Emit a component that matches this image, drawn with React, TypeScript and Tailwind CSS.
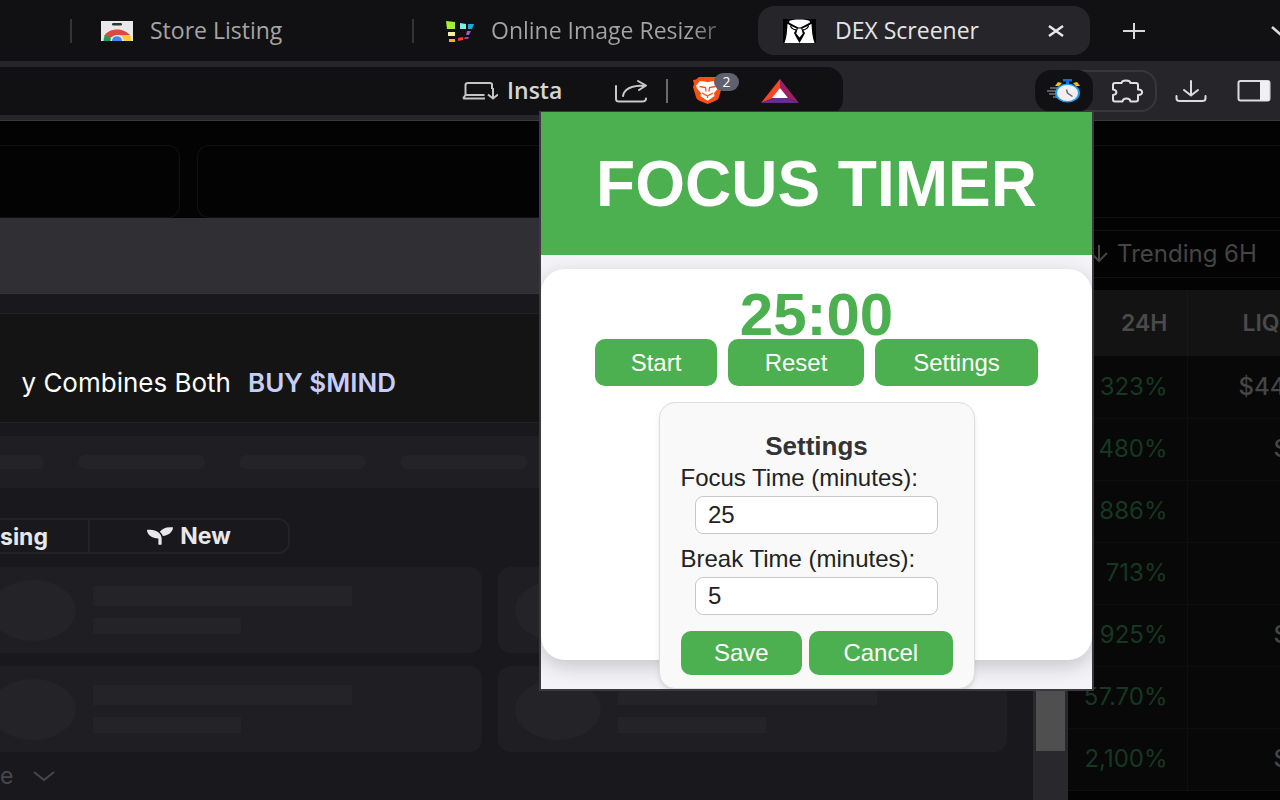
import type { ReactNode } from 'react';
import { FaSeedling } from 'react-icons/fa';

type Row = { change: string; liq: string; near?: boolean };

const ROWS: Row[] = [
  { change: '323%', liq: '$44', near: true },
  { change: '480%', liq: '$' },
  { change: '886%', liq: '' },
  { change: '713%', liq: '' },
  { change: '925%', liq: '$' },
  { change: '57.70%', liq: '' },
  { change: '2,100%', liq: '$' },
];

function StoreIcon() {
  return (
    <svg className="h-5 w-8 shrink-0" viewBox="0 0 32 20">
      <path fill="#e9e9ea" d="M0 0h32v20H0z" />
      <rect x="11" y="2" width="10" height="2.4" rx="1.2" fill="#333" />
      <path fill="#dc4a3e" d="M3 15C6 10.500 11 8.500 16 8.500s10 2 13 5.500H16l-7 3z" />
      <path fill="#1f9d58" d="M4 14c-1 2-1.500 4-1.500 6H11l-1.500-3z" />
      <path fill="#fccb3d" d="M16 14h13c1 2 1.500 4 1.500 6H21z" />
      <ellipse cx="16" cy="19.500" rx="6.500" ry="5.500" fill="#e9e9ea" />
      <ellipse cx="16" cy="19.500" rx="5" ry="4.300" fill="#4285f4" />
    </svg>
  );
}

function ResizerIcon() {
  return (
    <svg className="h-6 w-7 shrink-0" viewBox="0 0 28 24">
      <path fill="#a3f02c" d="M0 2l9 1v7H1z" />
      <path fill="#7df0ee" d="M14 4l6 1v5h-6z" />
      <path fill="#16a8e8" d="M22 5h6l-2 5h-4z" />
      <path fill="#f5f09a" d="M2 13h7v4H2z" />
      <path fill="#9a5cc8" d="M21 12h4l-2 4h-3z" />
      <path fill="#f0b414" d="M3 20h6v3H3z" />
      <path fill="#f0420f" d="M12 19l5-1v3l-5 1z" />
      <path fill="#a83aa0" d="M19 18h4l-1 2h-4z" />
    </svg>
  );
}

function DexIcon() {
  return (
    <svg className="h-6 w-[33px] shrink-0" viewBox="0 0 33 24">
      <path fill="#000" d="M0 0h33v24H0z" />
      <path fill="#fff" d="M7 1.500C11 0 22 0 26 1.500L28.500 5c.5 6 .5 13 3 19h-30c2.500-6 2.500-13 3-19z" />
      <path fill="none" stroke="#000" strokeWidth="1.800" d="M4.500 3.500C8 6.500 12 7 15 9.500M28.500 3.500C25 6.500 21 7 18 9.500" />
      <path fill="none" stroke="#000" strokeWidth="1.300" d="M7.500 6.500c.5 3 3 4 5.500 4.500M25.500 6.500c-.5 3-3 4-5.500 4.500" />
      <path fill="#000" d="M14.500 8.500L11 14l1.500 3 4 7 4-7L22 14l-3.500-5.500z" />
      <path fill="#fff" d="M14.800 9.500h3.400l1.600 5-3.300 4-3.300-4z" />
    </svg>
  );
}

function InstallIcon() {
  return (
    <svg className="h-5 w-9 shrink-0" viewBox="0 0 36 20" fill="none" stroke="#c4c4c6" strokeWidth="2">
      <path d="M30 8V3.500Q30 2 28 2H6Q3.500 2 3.500 4v10h19M1 17.500h22M1 17.500l2.500-3.500M31 7v10.500M26 13.500l5 4 5-4" />
    </svg>
  );
}

function ShareIcon() {
  return (
    <svg className="h-6 w-[34px]" viewBox="0 0 34 24" fill="none" stroke="#c9c9cb" strokeWidth="2" strokeLinecap="round" strokeLinejoin="round">
      <path d="M2 7v13q0 2.500 3 2.500h23q4 0 4-3" />
      <path d="M9 17C10 9.500 18 6.500 31 6.500M24 2l8 4.500-7 4.500" />
    </svg>
  );
}

function LionIcon() {
  return (
    <svg className="h-[27px] w-[31px]" viewBox="0 0 31 27">
      <path fill="#fb4f13" d="M7 0h17l3 2.500 3 .5-1 4 1 3-3 10c-.5 2-2 3-4 4l-7.500 3L8 24c-2-1-3.500-2-4-4L1 10l1-3-1-4 3-.500z" />
      <path fill="#fff" d="M8 4l4.500.5 3 .7 3-.7L23 4l4 4.500-1 3-4 4.500.5 3-7 5-7-5L9 16l-4-4.500-1-3z" />
      <path fill="none" stroke="#fb4f13" strokeWidth="1.300" d="M7.500 9.500l6 1 .5 4M23.500 9.500l-6 1-.5 4M10 16l5.500 3 5.500-3M15.500 19v2" />
    </svg>
  );
}

function BatIcon() {
  return (
    <svg className="h-6 w-[38px]" viewBox="0 0 38 24">
      <path fill="#ff4724" d="M19 0v9l-7 10L0 24z" />
      <path fill="#9e1f63" d="M19 0l19 24-12-5-7-10z" />
      <path fill="#662d91" d="M0 24l12-5h14l12 5z" />
      <path fill="#fff" d="M19 9l8 10H11z" />
    </svg>
  );
}

function StopwatchIcon() {
  return (
    <svg className="h-6 w-9" viewBox="0 0 36 24">
      <path stroke="#77777a" strokeWidth="1.500" d="M4 9h9M1 12h10M3 15h9M7 18h6" />
      <path fill="#f5c400" d="M9 7l3-4 4 1-3 3zM34 7l-3-4-4 1 3 3z" />
      <path fill="#0d6fd0" d="M17 0h9v2.500h-3V5h-3V2.500h-3z" />
      <ellipse cx="21.500" cy="14" rx="12.500" ry="9.500" fill="#1e9bf5" />
      <ellipse cx="21.500" cy="14" rx="10.500" ry="8" fill="#f4eef0" />
      <path stroke="#5d6b78" strokeWidth="1.500" fill="none" d="M20.500 10.500l1 3.500 5 3.500" />
    </svg>
  );
}

function PuzzleIcon() {
  return (
    <svg className="h-6 w-[34px]" viewBox="0 0 34 24" fill="none" stroke="#e0e0e3" strokeWidth="2" strokeLinejoin="round">
      <path d="M5 4h6.500C12 .5 20 .5 20.500 4H26q2 0 2 2v4.500c5.500.2 5.500 5.300 0 5.500v4.500q0 2-2 2h-5.500c-.5-4-7.500-4-8 0H5q-2 0-2-2V16c4.500-.5 4.500-5 0-5.500V6q0-2 2-2z" />
    </svg>
  );
}

function DownloadIcon() {
  return (
    <svg className="h-6 w-8" viewBox="0 0 32 24" fill="none" stroke="#dcdcde" strokeWidth="2" strokeLinecap="round" strokeLinejoin="round">
      <path d="M16 2v14M9 11l7 5.500 7-5.500M1.500 17v2.500Q1.500 22 5 22h22q3.500 0 3.500-2.500V17" />
    </svg>
  );
}

function SidebarIcon() {
  return (
    <svg className="h-6 w-[34px]" viewBox="0 0 34 24">
      <rect x="1.500" y="2" width="31" height="19.500" rx="2" fill="none" stroke="#dcdcde" strokeWidth="2" />
      <path fill="#f0f0f2" d="M23 2h9v19.500h-9z" />
    </svg>
  );
}

function TabBar() {
  return (
    <nav className="flex h-[61px] shrink-0 items-center overflow-hidden bg-[#111114] font-['Open_Sans',sans-serif] text-[23px] text-[#a4a4a6]">
      <div className="h-6 w-[72px] shrink-0 border-r-2 border-[#343337]" />
      <a href="#store" className="flex h-6 w-[342px] shrink-0 items-center gap-[17px] border-r-2 border-[#343337] pl-[29px]">
        <StoreIcon />
        Store Listing
      </a>
      <a href="#resizer" className="flex h-10 w-[344px] shrink-0 items-center gap-[17px] pl-8">
        <ResizerIcon />
        <span className="w-[236px] overflow-hidden bg-linear-to-r from-[#a4a4a6] from-85% to-[#3a3a3d] bg-clip-text whitespace-nowrap text-transparent">
          Online Image Resizer
        </span>
      </a>
      <div className="flex h-[49px] w-[332px] shrink-0 items-center rounded-2xl bg-[#26252a] px-[25px] text-[#e4e4e6]">
        <DexIcon />
        <a href="#dex" className="ml-[19px] flex-1">DEX Screener</a>
        <button type="button" aria-label="Close tab">
          <svg className="h-4 w-[18px]" viewBox="0 0 18 16" stroke="#e8e8ea" strokeWidth="2.500">
            <path d="M2 3l14 10M16 3L2 13" />
          </svg>
        </button>
      </div>
      <button type="button" aria-label="New tab" className="ml-8 shrink-0">
        <svg className="h-[18px] w-6" viewBox="0 0 24 18" stroke="#d8d8da" strokeWidth="2">
          <path d="M1 9h22M12 1v16" />
        </svg>
      </button>
      <button type="button" aria-label="Search tabs" className="ml-[125px] shrink-0">
        <svg className="h-[10px] w-[18px]" viewBox="0 0 18 10" fill="none" stroke="#d8d8da" strokeWidth="2.500">
          <path d="M1 1l8 7 8-7" />
        </svg>
      </button>
    </nav>
  );
}

function Toolbar() {
  return (
    <div className="flex h-[60px] shrink-0 items-center overflow-hidden border-b border-[#3a393d] bg-[#26252a]">
      <div className="flex h-12 w-[843px] shrink-0 items-center rounded-r-2xl bg-[#111114] pl-[462px]">
        <button type="button" className="flex items-center gap-[9px] text-[#d5d5d7]">
          <InstallIcon />
          <span className="w-[56px] overflow-hidden text-left font-['Open_Sans',sans-serif] text-[23px] font-semibold">
            Insta
          </span>
        </button>
        <button type="button" aria-label="Share" className="ml-[51px]">
          <ShareIcon />
        </button>
        <div className="ml-[18px] h-6 w-0.5 bg-[#6c6c70]" />
        <button type="button" aria-label="Shields" className="relative ml-6">
          <LionIcon />
          <span className="absolute -top-1 left-[22px] flex h-[18px] w-[25px] items-center justify-center rounded-full bg-[#5f616e] font-['Open_Sans',sans-serif] text-sm text-white">
            2
          </span>
        </button>
        <button type="button" aria-label="Rewards" className="ml-[38px]">
          <BatIcon />
        </button>
      </div>
      <div className="ml-48 flex h-[42px] w-[122px] shrink-0 items-center rounded-2xl border-2 border-[#38373c]">
        <button type="button" aria-label="Focus Timer" className="-ml-0.5 flex h-[42px] w-[58px] items-center justify-center rounded-2xl bg-[#111114]">
          <StopwatchIcon />
        </button>
        <button type="button" aria-label="Extensions" className="ml-[17px]">
          <PuzzleIcon />
        </button>
      </div>
      <button type="button" aria-label="Downloads" className="ml-[18px] shrink-0">
        <DownloadIcon />
      </button>
      <button type="button" aria-label="Sidebar" className="ml-[30px] shrink-0">
        <SidebarIcon />
      </button>
    </div>
  );
}

function SkeletonCard() {
  return (
    <div className="flex h-[86px] w-[509px] shrink-0 items-center gap-[17px] rounded-xl bg-[#1f1e22] pl-[17px]">
      <div className="h-[61px] w-[86px] rounded-[50%] bg-[#242327]" />
      <div className="flex flex-col gap-3">
        <div className="h-5 w-[259px] bg-[#242327]" />
        <div className="h-4 w-[148px] bg-[#242327]" />
      </div>
    </div>
  );
}

function Dialog() {
  return (
    <section className="flex min-w-0 flex-1 flex-col overflow-hidden bg-[#19181c]">
      <div className="h-[76px] shrink-0 border-b border-[#343337] bg-[#302f33]" />
      <div className="flex min-h-0 flex-1">
        <div className="min-w-0 flex-1 overflow-hidden pt-[19px] font-['Inter',sans-serif]">
          <div className="flex h-[110px] items-center gap-[17px] border-y border-[#222125] bg-[#141414] pt-7 text-[26px] whitespace-nowrap text-white">
            <p className="flex w-[231px] justify-end">y Combines Both</p>
            <a href="#mind" className="font-semibold text-[#c7cdfb]">
              BUY $MIND
            </a>
          </div>
          <div className="mt-[13px] flex h-[52px] items-center gap-[34px] bg-[#1f1e22]">
            <div className="h-[14px] w-11 shrink-0 rounded-r-full bg-[#242327]" />
            {[0, 1, 2, 3, 4, 5].map((i) => (
              <div key={i} className="h-[14px] w-[127px] shrink-0 rounded-full bg-[#242327]" />
            ))}
          </div>
          <div className="mt-[30px] flex h-9 w-[290px] rounded-r-xl border-y-2 border-r-2 border-[#232226] text-[23px] font-bold text-[#e8e8e9]">
            <button type="button" className="w-[90px] border-r-2 border-[#232226] text-left">
              sing
            </button>
            <button type="button" className="flex flex-1 items-center justify-center gap-[7px]">
              <FaSeedling className="h-5 w-[26px]" preserveAspectRatio="none" />
              New
            </button>
          </div>
          <div className="mt-[13px] -ml-[27px] flex flex-col gap-[13px]">
            {[0, 1].map((i) => (
              <div key={i} className="flex gap-4">
                <SkeletonCard />
                <SkeletonCard />
              </div>
            ))}
          </div>
          <button type="button" className="mt-2 flex items-center gap-5 text-[23px] leading-8 text-[#48474b]">
            e
            <svg className="h-[10px] w-[22px]" viewBox="0 0 22 10" fill="none" stroke="currentColor" strokeWidth="2">
              <path d="M1 1l10 8L21 1" />
            </svg>
          </button>
        </div>
        <div className="w-[35px] shrink-0 bg-[#29282c] px-[3px]">
          <div className="h-[457px] bg-[#4f4f4f]" />
        </div>
      </div>
    </section>
  );
}

function Screener() {
  return (
    <aside className="w-[212px] shrink-0 overflow-hidden pt-3 font-['Inter',sans-serif] text-2xl text-[#454545]">
      <button type="button" className="flex h-12 w-full items-center gap-[9px] border-y border-[#121212] pl-[22px] whitespace-nowrap">
        <svg className="h-5 w-[18px] shrink-0" viewBox="0 0 18 20" fill="none" stroke="currentColor" strokeWidth="2">
          <path d="M9 1v16M1 9l8 8 8-8" />
        </svg>
        Trending 6H
      </button>
      <table className="mt-3 w-full table-fixed border-collapse">
        <thead>
          <tr className="h-[66px] bg-[#131313] text-[23px] text-[#4a4a4a]">
            <th className="w-[119px] border-r border-[#181818] p-0 pr-[19px] text-right font-semibold">24H</th>
            <th className="p-0 pl-[55px] text-left font-semibold">LIQ</th>
          </tr>
        </thead>
        <tbody>
          {ROWS.map((row) => (
            <tr key={row.change} className="h-[62px] border-b border-[#0e0e0e] bg-[#080808]">
              <td className="border-r border-[#0f0f0f] p-0 pr-[19px] text-right text-[#153821]">{row.change}</td>
              <td className={row.near ? 'p-0 pl-[51px] font-medium' : 'p-0 pl-[86px] font-medium'}>{row.liq}</td>
            </tr>
          ))}
        </tbody>
      </table>
    </aside>
  );
}

function GreenButton({ className, children }: { className: string; children: ReactNode }) {
  return (
    <button type="button" className={`rounded-[10px] bg-[#4caf50] text-2xl text-white ${className}`}>
      {children}
    </button>
  );
}

function SettingsPanel() {
  return (
    <form className="mx-auto mt-4 w-[316px] rounded-2xl border border-[#dedede] bg-[#f9f9f9] px-[21px] pt-[27px] pb-[13px] shadow-md">
      <h2 className="text-center text-[26px] leading-8 font-bold text-[#333]">Settings</h2>
      <label htmlFor="focus" className="mt-1 block text-2xl leading-6 text-[#222]">
        Focus Time (minutes):
      </label>
      <input
        id="focus"
        type="number"
        defaultValue={25}
        className="mx-auto mt-[6px] block h-[38px] w-[243px] rounded-lg border border-[#c8c8c8] bg-white px-3 text-2xl text-[#222]"
      />
      <label htmlFor="break" className="mt-[13px] block text-2xl leading-6 text-[#222]">
        Break Time (minutes):
      </label>
      <input
        id="break"
        type="number"
        defaultValue={5}
        className="mx-auto mt-[6px] block h-[38px] w-[243px] rounded-lg border border-[#c8c8c8] bg-white px-3 text-2xl text-[#222]"
      />
      <div className="mt-4 flex justify-center gap-[7px]">
        <GreenButton className="h-11 w-[122px]">Save</GreenButton>
        <GreenButton className="h-11 w-[144px]">Cancel</GreenButton>
      </div>
    </form>
  );
}

function TimerPopup() {
  return (
    <main className="absolute top-[111px] right-[186px] w-[555px] overflow-hidden border-x-2 border-t border-b-2 border-[#3a393e] bg-[#f4f3f8] pb-[29px] font-['Liberation_Sans',Arial,sans-serif]">
      <header className="flex h-[143px] items-center justify-center bg-[#4caf50]">
        <h1 className="text-[64px] leading-none font-bold whitespace-nowrap text-white">FOCUS TIMER</h1>
      </header>
      <div className="mt-[14px] h-[391px] rounded-[24px] bg-white pt-[22px] shadow-[0_6px_20px_rgba(0,0,0,0.2)]">
        <p className="text-center text-[60px] leading-[48px] font-bold text-[#4caf50]">25:00</p>
        <div className="flex justify-center gap-[11px]">
          <GreenButton className="h-[47px] w-[122px]">Start</GreenButton>
          <GreenButton className="h-[47px] w-[136px]">Reset</GreenButton>
          <GreenButton className="h-[47px] w-[163px]">Settings</GreenButton>
        </div>
        <SettingsPanel />
      </div>
    </main>
  );
}

export default function App() {
  return (
    <div className="relative flex h-screen flex-col overflow-hidden bg-[#030303]">
      <TabBar />
      <Toolbar />
      <div className="flex h-[97px] shrink-0 gap-[17px] pt-6">
        <div className="w-[180px] shrink-0 rounded-r-xl border-y border-r border-[#111112]" />
        <div className="flex-1 rounded-l-xl border-y border-l border-[#111112]" />
      </div>
      <div className="flex min-h-0 flex-1">
        <Dialog />
        <Screener />
      </div>
      <TimerPopup />
    </div>
  );
}
